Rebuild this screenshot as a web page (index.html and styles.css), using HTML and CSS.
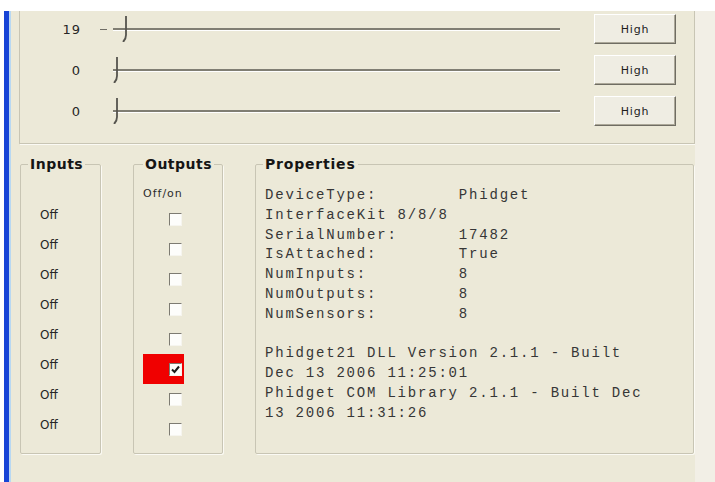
FILE: index.html
```html
<!DOCTYPE html>
<html lang="en">
<head>
<meta charset="utf-8">
<title>InterfaceKit</title>
<link rel="stylesheet" href="styles.css">
</head>
<body>
<div class="window">
  <div class="client">
    <div class="main">
      <!-- analog sensor rows: value, trackbar, sensitivity button -->
      <section class="sensors">
        <div class="sensor-row">
          <span class="value">19</span>
          <div class="slider">
            <span class="lead"><span class="focus-tick"></span></span>
            <div class="track">
              <svg class="thumb" style="left:9px" width="6" height="26" viewBox="0 0 6 26"><path d="M4 0 V19 Q4 23 1 26" fill="none" stroke="#55544e" stroke-width="1.8"/></svg>
            </div>
          </div>
          <button class="btn">High</button>
        </div>
        <div class="sensor-row">
          <span class="value">0</span>
          <div class="slider">
            <span class="lead"></span>
            <div class="track">
              <svg class="thumb" style="left:0px" width="6" height="26" viewBox="0 0 6 26"><path d="M4 0 V19 Q4 23 1 26" fill="none" stroke="#55544e" stroke-width="1.8"/></svg>
            </div>
          </div>
          <button class="btn">High</button>
        </div>
        <div class="sensor-row">
          <span class="value">0</span>
          <div class="slider">
            <span class="lead"></span>
            <div class="track">
              <svg class="thumb" style="left:0px" width="6" height="26" viewBox="0 0 6 26"><path d="M4 0 V19 Q4 23 1 26" fill="none" stroke="#55544e" stroke-width="1.8"/></svg>
            </div>
          </div>
          <button class="btn">High</button>
        </div>
      </section>

      <div class="panels">
        <fieldset class="group inputs">
          <legend>Inputs</legend>
          <ul class="states">
            <li>Off</li><li>Off</li><li>Off</li><li>Off</li>
            <li>Off</li><li>Off</li><li>Off</li><li>Off</li>
          </ul>
        </fieldset>

        <fieldset class="group outputs">
          <legend>Outputs</legend>
          <div class="caption">Off/on</div>
          <ul class="toggles">
            <li class="cell"><span class="box"></span></li>
            <li class="cell"><span class="box"></span></li>
            <li class="cell"><span class="box"></span></li>
            <li class="cell"><span class="box"></span></li>
            <li class="cell"><span class="box"></span></li>
            <li class="cell on"><span class="box"><svg width="11" height="11" viewBox="0 0 11 11"><path d="M2 5.5 L4.5 8 L9 2.5" fill="none" stroke="#1a1a1a" stroke-width="2"/></svg></span></li>
            <li class="cell"><span class="box"></span></li>
            <li class="cell"><span class="box"></span></li>
          </ul>
        </fieldset>

        <fieldset class="group props">
          <legend>Properties</legend>
          <pre class="readout">DeviceType:        Phidget
InterfaceKit 8/8/8
SerialNumber:      17482
IsAttached:        True
NumInputs:         8
NumOutputs:        8
NumSensors:        8

Phidget21 DLL Version 2.1.1 - Built
Dec 13 2006 11:25:01
Phidget COM Library 2.1.1 - Built Dec
13 2006 11:31:26</pre>
        </fieldset>
      </div>
    </div>
    <div class="edge"></div>
  </div>
</div>
</body>
</html>
```

FILE: styles.css
```css
* { box-sizing: border-box; }

html, body { margin: 0; }

body {
  width: 715px;
  height: 482px;
  overflow: hidden;
  background: #ffffff;
  font-family: "DejaVu Sans", sans-serif;
  color: #222;
}

/* window frame: blue left border with a light inner edge */
.window {
  margin: 11px 0 0 4px;
  height: 471px;
  border-left: 5px solid #1744d6;
  display: flex;
}

.client {
  flex: 1;
  display: flex;
  border-left: 2px solid #b8d8f2;
  background: #ece9d8;
}

.main {
  width: 684px;
  padding-left: 8px;
}

.edge {
  flex: 1;
  background: #f2efe6;
}

/* ---------- sensor group ---------- */
.sensors {
  width: 676px;
  border: 1px solid #c8c5b4;
  border-top: none;
  box-shadow: 1px 1px 0 #fbfaf4;
  padding: 3px 18px 17px 0;
  display: flex;
  flex-direction: column;
  gap: 11px;
}

.sensor-row {
  display: grid;
  grid-template-columns: 61px 1fr 82px;
  align-items: center;
  height: 30px;
}

.value {
  text-align: right;
  font-size: 13px;
  letter-spacing: 1px;
  color: #262626;
}

.slider {
  display: flex;
  align-items: center;
  padding-right: 34px;
}

.lead {
  width: 32px;
  flex: none;
  display: flex;
  align-items: center;
}

.focus-tick {
  margin-left: 19px;
  width: 7px;
  height: 1px;
  background: #6f6d65;
}

.track {
  position: relative;
  flex: 1;
  height: 3px;
  border-top: 2px solid #807e73;
  border-bottom: 1px solid #ffffff;
}

.thumb {
  position: absolute;
  top: -14px;
  display: block;
}

.btn {
  width: 82px;
  height: 30px;
  margin: 0;
  padding: 0;
  background: #efede3;
  border: 1px solid;
  border-color: #ffffff #6f6d63 #6f6d63 #ffffff;
  box-shadow: inset -1px -1px 0 #aca899;
  font-family: "DejaVu Sans", sans-serif;
  font-size: 11px;
  letter-spacing: 0.8px;
  color: #1c1c1c;
}

/* ---------- lower panels ---------- */
.panels {
  display: flex;
  gap: 32px;
  margin-top: 12px;
  padding-left: 1px;
  height: 298px;
}

.group {
  margin: 0;
  padding: 0;
  min-width: 0;
  border: 1px solid #c8c5b4;
  border-radius: 2px;
  box-shadow: 1px 1px 0 #fbfaf4;
}

.group legend {
  margin-left: 9px;
  padding: 0 2px;
  font-size: 14px;
  line-height: 17px;
  font-weight: bold;
  letter-spacing: 0.5px;
  color: #151515;
}

.inputs { width: 81px; }
.inputs legend { margin-left: 7px; }
.outputs { width: 90px; }
.props { width: 439px; }
.props legend { margin-left: 7px; letter-spacing: 0.8px; }

.states {
  list-style: none;
  margin: 0;
  padding: 27px 0 0 19px;
}

.states li {
  height: 30px;
  line-height: 30px;
  font-size: 12px;
  color: #262626;
}

.caption {
  margin-top: 11px;
  padding-left: 9px;
  line-height: 20px;
  font-size: 11px;
  letter-spacing: 1px;
  color: #2c2c2c;
}

.toggles {
  list-style: none;
  margin: 0;
  padding: 0;
}

.cell {
  margin-left: 9px;
  width: 41px;
  height: 30px;
  display: flex;
  align-items: center;
  justify-content: flex-end;
  padding-right: 2px;
}

.cell.on { background: #f00000; }

.box {
  width: 13px;
  height: 13px;
  display: flex;
  align-items: center;
  justify-content: center;
  background: #fdfdfb;
  border: 1px solid;
  border-color: #7d7b72 #f6f5ef #f6f5ef #7d7b72;
}

.readout {
  margin: 0;
  padding: 13px 0 0 9px;
  font-family: "Liberation Mono", monospace;
  font-size: 14px;
  letter-spacing: 1.8px;
  line-height: 19.8px;
  color: #363636;
}
```
